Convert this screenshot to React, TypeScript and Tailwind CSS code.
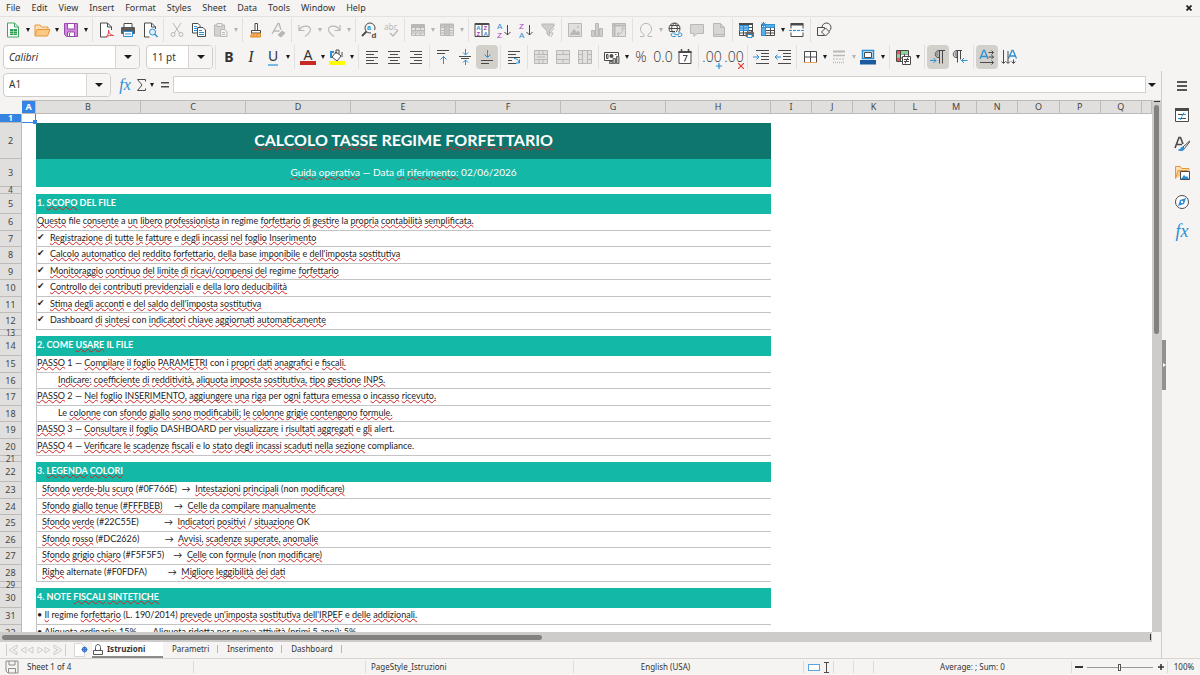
import type { ReactNode } from "react";
import clsx from "clsx";

const INK = "#4a4a4a";
const BLUE = "#2a8fd4";
const DIM = "#bab8b5";

const Icon = ({ children }: { children: ReactNode }) => (
  <svg className="w-4 h-4 shrink-0 overflow-visible" viewBox="0 0 16 16" fill="none" stroke={INK} strokeWidth="1" aria-hidden="true">
    {children}
  </svg>
);

const Caret = ({ dim, big }: { dim?: boolean; big?: boolean }) => (
  <svg className={big ? "w-2 h-1 shrink-0" : "w-1 h-1 shrink-0"} viewBox="0 0 8 5" preserveAspectRatio="none" aria-hidden="true">
    <path d="M0 0h8L4 5z" fill={dim ? "#b5b3b0" : "#1c1c1c"} />
  </svg>
);

// lines given as [x1, x2] pairs stacked from the top
const Lines = ({ rows, y = 2, step = 3, color = INK }: { rows: number[][]; y?: number; step?: number; color?: string }) => (
  <path stroke={color} d={rows.map(([a, b], i) => `M${a} ${y + i * step + 0.5}H${b}`).join("")} />
);

const gridPath = "M1.5 2.5h13v11h-13zM1.5 5.5h13M1.5 8.5h13M1.5 11h13M5.5 2.5v11M10.5 2.5v11";

const icons: Record<string, ReactNode> = {
  new: (
    <>
      <path d="M2.500 1h7l4 4v10h-11z" fill="#fff" stroke="#3fa662" />
      <path d="M9.500 1v4h4" stroke="#3fa662" />
      <path d="M5 7h7v6H5z" fill="#2f9e55" stroke="none" />
      <path d="M5 9.500h7M5 11.500h7M8.500 7v6" stroke="#bfe5cb" strokeWidth=".6" />
    </>
  ),
  open: (
    <>
      <path d="M1 13.500V3h5l1.500 2H14v2.500" fill="#fce0b4" stroke="#e8973a" />
      <path d="M3 7.500h13L13.500 14H1z" fill="#fbc981" stroke="#e8973a" />
    </>
  ),
  save: (
    <>
      <path d="M1.500 1.500h13v13h-11l-2-2z" fill="#d188dd" stroke="#9b48ad" />
      <path d="M4.500 1.500h7V7h-7z" fill="#fff" stroke="#9b48ad" />
      <path d="M4.500 10h7v4.500h-7z" fill="#fff" stroke="#9b48ad" />
      <path d="M6.500 11v3" stroke="#9b48ad" />
    </>
  ),
  pdf: (
    <>
      <path d="M13.500 8V5l-4-4h-7v14h6" fill="#fff" />
      <path d="M9.500 1v4h4" />
      <path d="M8 15c2-2 3-4 2.500-7 1 4 2 5 5 5.500-3-.5-5 0-7.500 1.500" stroke="#e03b4a" />
    </>
  ),
  print: (
    <>
      <path d="M4 5V1.500h8V5" fill="#fff" />
      <rect x="1" y="5" width="14" height="7" rx="1" fill="#5a5a5a" stroke="none" />
      <path d="M3.500 9.500h9v5h-9z" fill="#fff" stroke={BLUE} />
      <path d="M5 12h6" stroke={BLUE} />
    </>
  ),
  preview: (
    <>
      <path d="M13.500 7V5l-4-4h-7v14h5" fill="#fff" />
      <path d="M9.500 1v4h4" />
      <circle cx="10.500" cy="10" r="3" fill="#dff0fb" stroke={BLUE} />
      <path d="m12.800 12.300 2.700 2.700" stroke={BLUE} strokeWidth="1.500" />
    </>
  ),
  cut: (
    <g stroke={DIM}>
      <path d="M4 1l6.500 10M12 1 5.500 11" />
      <circle cx="4" cy="12.500" r="2" />
      <circle cx="12" cy="12.500" r="2" />
    </g>
  ),
  copy: (
    <>
      <path d="M1.500 1.500H7l2 2V11H1.500z" fill="#fff" />
      <path d="M6.500 5.500H12l2.500 2.500v6.500h-8z" fill="#fff" />
      <path d="M3 4.500h3M3 6.500h3M3 8.500h3M8 8.500h3M8 10.500h5M8 12.500h5" stroke={BLUE} />
    </>
  ),
  paste: (
    <g stroke={DIM}>
      <path d="M1.500 3h10v11h-10z" fill="#d5d3d1" />
      <path d="M4 1.500h5v3H4z" fill="#eee" />
      <path d="M7.500 7.500h4l2.500 2v5H7.500z" fill="#f5f4f2" />
      <path d="M9 10.500h3M9 12.500h3" />
    </g>
  ),
  brush: (
    <>
      <path d="M7 8V1.500h2.500V8" fill="#fff" />
      <path d="M3.500 8.500h9v2.500h-9z" fill="#fff" />
      <path d="M3.500 11.500h9v3.500h-10z" fill="#f4b266" stroke="#e08a2c" />
      <path d="M6 12v3M9 12v3" stroke="#e08a2c" />
    </>
  ),
  clear: (
    <g stroke={DIM}>
      <path d="M2 12 8 1.500h1L11 8M4 9h5.500" strokeWidth="1.300" />
      <path d="m8 13 4-4 3 2-4 4z" fill={DIM} />
    </g>
  ),
  undo: <path d="M2 3v5.500h5.500M2.500 8C5 3 13 3 13.500 7.500c0 3-3 5-5.500 7" stroke={DIM} strokeWidth="1.200" />,
  redo: <path d="M14 3v5.500H8.500M13.500 8C11 3 3 3 2.500 7.500c0 3 3 5 5.500 7" stroke={DIM} strokeWidth="1.200" />,
  find: (
    <>
      <circle cx="9" cy="6" r="5" />
      <path d="M5.500 9.500 1 14" strokeWidth="1.800" />
      <path d="M10 8h6v8h-6z" fill="#f5f4f2" stroke="none" />
      <text x="6" y="8" fontSize="7" fontWeight="700" fontFamily="Liberation Sans" fill={BLUE} stroke="none">a</text>
      <text x="10.500" y="15.500" fontSize="8" fontWeight="700" fontFamily="Liberation Sans" fill={INK} stroke="none">d</text>
    </>
  ),
  spell: (
    <>
      <text x="1" y="8" fontSize="8" fontFamily="Noto Sans" fill={DIM} stroke="none">abc</text>
      <path d="m7 11 3 3 5-6" stroke={DIM} strokeWidth="1.300" />
    </>
  ),
  rows: (
    <>
      <path d={gridPath} stroke={DIM} fill="#e6e4e2" />
      <path d="M1.500 2.500h13v3h-13z" fill={DIM} stroke="none" />
      <path d="M2 9h12v2H2z" fill="#cfcdca" stroke="none" />
    </>
  ),
  cols: (
    <>
      <path d={gridPath} stroke={DIM} fill="#e6e4e2" />
      <path d="M5.500 2.500h5v11h-5zM1.500 2h13v2h-13z" fill="#c6c4c1" stroke={DIM} />
    </>
  ),
  sort: (
    <>
      <path d="M1 1.500h14v13H1zM8 2v12" fill="#fff" />
      <path d="M1 1h14v2H1z" fill={INK} stroke="none" />
      <g fontSize="6" fontWeight="700" fontFamily="Liberation Sans" stroke="none">
        <text x="2.200" y="8.200" fill={BLUE}>A</text>
        <text x="2.400" y="14" fill="#a43cba">Z</text>
        <text x="9.600" y="8.200" fill="#a43cba">Z</text>
        <text x="9.400" y="14" fill={BLUE}>A</text>
      </g>
    </>
  ),
  az: (
    <>
      <g fontSize="8" fontFamily="Liberation Sans" stroke="none">
        <text x="1" y="6.500" fill={BLUE}>A</text>
        <text x="1" y="15.500" fill="#a43cba">Z</text>
      </g>
      <path d="M11.500 3v10M8.500 10l3 3 3-3" />
    </>
  ),
  za: (
    <>
      <g fontSize="8" fontFamily="Liberation Sans" stroke="none">
        <text x="1" y="6.500" fill="#a43cba">Z</text>
        <text x="1" y="15.500" fill={BLUE}>A</text>
      </g>
      <path d="M11.500 3v10M8.500 10l3 3 3-3" />
    </>
  ),
  filter: (
    <>
      <path d="M2 2h12v2l-4.500 5v5L7 12V9L2 4z" fill="#cfcdca" stroke={DIM} />
      <path d="m14 6-4 5h3l-2 4" stroke={DIM} />
    </>
  ),
  image: (
    <>
      <path d="M1.500 1.500h13v13h-13z" fill="#e2e0de" stroke={DIM} />
      <path d="M3 12l4-5 3 3 1.500-1.500L13 11v2H3z" fill={DIM} stroke="none" />
      <circle cx="11" cy="5" r="1" fill={DIM} stroke="none" />
    </>
  ),
  chart: <path d="M2.500 8.500h3v6h-3zM6.500 1.500h3v13h-3zM10.500 6.500h3v8h-3z" fill="#cfcdca" stroke={DIM} />,
  pivot: (
    <>
      <path d="M1.500 1.500h13v13h-13z" fill="#e2e0de" stroke={DIM} />
      <path d="M2 3.500h12M3.500 2v12" stroke={DIM} strokeWidth="2" />
      <path d="M6 12c4 0 6-2 6-6M10 7.500 12 5.500l2 2M8 10l-2 2 2 2" stroke={DIM} />
    </>
  ),
  omega: <path d="M2 14.500h4v-2C3.500 11 2.500 9 2.500 7c0-7.500 11-7.500 11 0 0 2-1 4-3.500 5.500v2h4" stroke={DIM} />,
  globe: (
    <>
      <circle cx="7.500" cy="6.500" r="5.500" />
      <path d="M2 6.500h11M7.500 1c-4 4-4 7 0 11M7.500 1c4 4 4 7 0 11M3 3.500h9M3 9.500h5" />
      <path d="M3 10h13v6H3z" fill="#f5f4f2" stroke="none" />
      <path d="M8.500 11H5.500a1.800 1.800 0 0 0 0 3.500h3M11 11h2.500a1.800 1.800 0 0 1 0 3.500H11M7.500 12.700h4.500" stroke={BLUE} />
    </>
  ),
  comment: <path d="M1.500 2.500h13v9H8l-3 3v-3H1.500z" fill="#d8d6d4" stroke={DIM} />,
  header: (
    <>
      <path d="M2.500 1.500h7l4 4v9h-11z" fill="#d8d6d4" stroke={DIM} />
      <path d="M9.500 1.500v4h4M3 12.500h10" stroke={DIM} />
    </>
  ),
  area: (
    <>
      <path d={gridPath} fill="#fff" />
      <path d="M1 1h14v2H1z" fill={INK} stroke="none" />
      <path d="M1.500 3.500h9v5h-9z" fill="#7cc1ee" stroke={BLUE} />
      <path d="M1.500 6h9M5.500 3.500v5" stroke={BLUE} />
      <path d="M9.500 9h4v2h-4z" fill="#fff" stroke="#666" />
      <path d="M8 10.500h7.500v4H8z" fill="#666" stroke="#666" />
      <path d="M9.500 12.500h4.500v3H9.500z" fill="#fff" stroke={BLUE} />
    </>
  ),
  freeze: (
    <>
      <path d={gridPath} fill="#fff" />
      <path d="M5.500 2.500h9v3h-9zM1.500 5.500h4v8h-4z" fill="#58b0e8" stroke={BLUE} />
      <path d="M3.500 0v5M1 2.500h5M1.500 .8l4 3.500M5.500 .8l-4 3.500" stroke={BLUE} />
    </>
  ),
  split: (
    <>
      <path d="M2 6.500V2.500h12v4M2 10.500v4h12v-4" fill="#fff" />
      <path d="M1.500 1h13v2.500h-13z" fill={INK} stroke="none" />
      <path d="M0 8.500h16" stroke={BLUE} strokeDasharray="3 1" />
    </>
  ),
  shapes: (
    <>
      <circle cx="10.500" cy="5.500" r="4.500" />
      <path d="M1.500 5.500h7v8h-7z" fill="#f5f4f2" />
      <path d="m9.500 6 4 4-4 4-4-4z" fill="#f5f4f2" />
    </>
  ),
  left: <Lines rows={[[2, 14], [2, 10], [2, 14], [2, 10], [2, 14]]} />,
  center: <Lines rows={[[2, 14], [4, 12], [2, 14], [4, 12], [2, 14]]} />,
  right: <Lines rows={[[2, 14], [6, 14], [2, 14], [6, 14], [2, 14]]} />,
  top: (
    <>
      <Lines rows={[[2, 14], [2, 10]]} y={1} />
      <path d="M8.500 15V7.500M5.500 10.500l3-3 3 3" stroke={BLUE} />
    </>
  ),
  middle: (
    <>
      <Lines rows={[[2, 14], [4, 12]]} y={7} step={2} />
      <path d="M8.500 0v5.500M6 3.500l2.500 2.500L11 3.500M8.500 16v-5M6 13.500 8.500 11l2.500 2.500" stroke={BLUE} />
    </>
  ),
  bottom: (
    <>
      <Lines rows={[[2, 14], [2, 10]]} y={11} />
      <path d="M8.500 1v7M5.500 5.500l3 3 3-3" stroke={BLUE} />
    </>
  ),
  wrap: (
    <>
      <Lines rows={[[2, 14], [2, 10], [2, 14], [2, 6], [2, 10]]} />
      <path d="M8 9.500c3 0 4 1 5 4M13.500 10.500v3.500H10" stroke={BLUE} />
    </>
  ),
  merge: (
    <>
      <path d="M1.500 1.500h13v13h-13zM1.500 5.500h13M1.500 10.500h13M6 1.500v4M10 1.500v4M6 10.500v4M10 10.500v4" stroke={DIM} fill="#e2e0de" />
      <path d="M4 8h8" stroke={DIM} />
    </>
  ),
  mergeRow: <path d="M1.500 1.500h13v13h-13zM1.500 5.500h13M1.500 10.500h13M8 1.500v4M8 10.500v4" stroke={DIM} fill="#e2e0de" />,
  mergeCol: <path d="M1.500 1.500h13v13h-13zM1.500 5.500h4M10.500 5.500h4M1.500 10.500h4M10.500 10.500h4M5.500 1.500v13M10.500 1.500v13" stroke={DIM} fill="#e2e0de" />,
  money: (
    <>
      <path d="M.5 3.500h14v8H.5z" fill="#fff" />
      <circle cx="7.500" cy="7" r="2" fill={INK} stroke="none" />
      <path d="M2.500 5.500h1.500v4H2.500zM11 5.500h1.500" />
      <path d="M5.500 12.500h3v2h-3zM9 9.500h2.500v5H9zM12.500 7.500h2.500v7h-2.500z" fill="#b5b3b0" stroke="#666" />
    </>
  ),
  date: (
    <>
      <path d="M2 2.500h12v12H2z" fill="#fff" />
      <path d="M1.500 2h13v2h-13z" fill={INK} stroke="none" />
      <path d="M4.500 0v3M11.500 0v3" strokeWidth="1.500" />
      <path d="M6 6.500h4L7.500 12.500" strokeWidth="1.100" />
    </>
  ),
  indent: (
    <>
      <path d="M3 1.500h13M8 4.500h8M8 7.500h8M8 10.500h8M3 14.500h13" />
      <path d="M0 8h6M3.500 5.500 6 8l-2.500 2.500" stroke={BLUE} />
    </>
  ),
  outdent: (
    <>
      <path d="M3 1.500h13M8 4.500h8M8 7.500h8M8 10.500h8M3 14.500h13" />
      <path d="M0 8h6M2.500 5.500 0 8l2.500 2.500" stroke={BLUE} />
    </>
  ),
  border: (
    <>
      <path d="M2.500 2.500h12v11h-12z" fill="#fff" />
      <path d="M8.500 2.500v11M2.500 8h12" />
      <path d="M2 13.500h13" stroke="#e8a35a" />
    </>
  ),
  lineStyle: (
    <g stroke={DIM}>
      <path d="M2 2.500h12" strokeWidth="2" />
      <path d="M2 6.500h12" strokeWidth="1.500" />
      <path d="M2 10h12" strokeDasharray="2 1" />
      <path d="M2 13.500h12" strokeWidth="1.500" strokeDasharray="1 1" />
    </g>
  ),
  lineColor: (
    <>
      <path d="M2.500 1.500h11v8h-11z" fill="#d9eefb" stroke={BLUE} strokeWidth="1.500" />
      <path d="M4.500 3.500h7v5h-7z" fill="#fff" />
      <path d="M0 11h16v4.500H0z" fill="#1d5a9e" stroke="none" />
    </>
  ),
  conditional: (
    <>
      <path d="M1.500 1.500h12v11h-12zM1.500 5h12M1.500 9h12M5.500 1.500v11M9.500 1.500v11" fill="#fff" />
      <path d="M2 2h3v3H2zM2 9h3v3H2z" fill="#e8584f" stroke="none" />
      <path d="M6 2h7v3H6zM2 5.500h3v3H2z" fill="#8ed39b" stroke="none" />
      <path d="M7.500 7.500h8v8h-8z" fill="#fff" />
      <path d="M9 10.500h5M9 12.500h5M13 8.500l-3 6" />
    </>
  ),
  ltr: (
    <>
      <path d="M9 8.500C4 9 4 2 9 1.500h6M9.500 1.500v13M12.500 1.500v13" />
      <path d="M8.500 2C5 2.500 5 8 8.500 8z" fill="#9b9a98" stroke="none" />
      <path d="M0 11.500h6M3.500 9 6 11.500 3.500 14" stroke={BLUE} />
    </>
  ),
  rtl: (
    <>
      <path d="M5 8.500C0 9 0 2 5 1.500h5M5.500 1.500v12M8.500 1.500v9" />
      <path d="M5 2C1.500 2.500 1.500 8 5 8z" fill="#9b9a98" stroke="none" />
      <path d="M9.500 11.500h6M12 9l-2.500 2.500L12 14" stroke={BLUE} />
    </>
  ),
  horizontal: (
    <>
      <path d="M1 10 4.500 1.500h1L9 10M2.500 7.500h5" stroke={BLUE} strokeWidth="1.300" />
      <path d="M9.500 3.500h5M9.500 8h5M1 13.500h13.500M12.500 1.500l2 2-2 2M12.500 6l2 2-2 2M12.500 11.500l2 2-2 2" />
    </>
  ),
  vertical: (
    <>
      <path d="M7.500 9.500 11 1.500h1L15.500 9.500M9 7h5" stroke={BLUE} strokeWidth="1.300" />
      <path d="M2.500 1v13M7 2v12M12.500 10.500V14M.5 12.500l2 2 2-2M5 12.500l2 2 2-2M10.500 12.500l2 2 2-2" />
    </>
  ),
  properties: (
    <>
      <path d="M1.500 1.500h13v13h-13z" fill="#fff" />
      <path d="M1 1h14v3H1z" fill={INK} stroke="none" />
      <path d="M4 7.500h8M4 11.500h8" />
      <path d="M10 5.500 8 9M8 9.500 6 13M9 7.500h3M4 11.500h3" stroke={BLUE} />
    </>
  ),
  styles: (
    <>
      <path d="M1 12 5 1.500h1.500L9 8M3 8.500h5" strokeWidth="1.600" />
      <path d="m15.500 5-6.500 6 1.500 1.500L15.500 6z" fill="#fff" />
      <path d="M4.500 14c3 0 2-3 4.500-3l1.500 1.500c-1 2.500-4 2.500-6 1.500z" fill={BLUE} stroke={BLUE} />
    </>
  ),
  gallery: (
    <>
      <path d="M1.500 13.500v-12h5l1 2H15v2" fill="#fce0b4" stroke="#e8973a" />
      <path d="M1.500 13.500 4 5.500h10" fill="#fbc981" stroke="#e8973a" />
      <path d="M6.500 6.500h9v8h-9z" fill="#fff" />
      <path d="m7 14 3-4 2 2 1-1 2 3z" fill={BLUE} stroke="none" />
    </>
  ),
  navigator: (
    <>
      <circle cx="8" cy="8" r="6.500" fill="#fff" />
      <path d="m12 4-2 6-6 2 2-6z" fill={BLUE} stroke="none" />
      <circle cx="8" cy="8" r="1.200" fill="#fff" stroke="none" />
    </>
  ),
  diskDim: <path d="M2 2h12v12H4l-2-2zM5 2v4h6V2M4.500 14V9.500h7V14" stroke="#8e8c8a" />,
};

type Tool = { id: string; label: string; drop?: boolean; off?: boolean; on?: boolean; face?: ReactNode };
const SEP = "|";

const standard: (Tool | string)[] = [
  { id: "new", label: "New", drop: true },
  { id: "open", label: "Open", drop: true },
  { id: "save", label: "Save", drop: true }, SEP,
  { id: "pdf", label: "Export as PDF" },
  { id: "print", label: "Print" },
  { id: "preview", label: "Print preview" }, SEP,
  { id: "cut", label: "Cut", off: true },
  { id: "copy", label: "Copy" },
  { id: "paste", label: "Paste", drop: true, off: true }, SEP,
  { id: "brush", label: "Clone formatting" },
  { id: "clear", label: "Clear formatting", off: true }, SEP,
  { id: "undo", label: "Undo", drop: true, off: true },
  { id: "redo", label: "Redo", drop: true, off: true }, SEP,
  { id: "find", label: "Find and replace" },
  { id: "spell", label: "Spelling", off: true }, SEP,
  { id: "rows", label: "Row", drop: true, off: true },
  { id: "cols", label: "Column", drop: true, off: true }, SEP,
  { id: "sort", label: "Sort" },
  { id: "az", label: "Sort ascending" },
  { id: "za", label: "Sort descending" },
  { id: "filter", label: "AutoFilter", off: true }, SEP,
  { id: "image", label: "Insert image", off: true },
  { id: "chart", label: "Insert chart", off: true },
  { id: "pivot", label: "Pivot table", off: true }, SEP,
  { id: "omega", label: "Special character", drop: true, off: true },
  { id: "globe", label: "Hyperlink" },
  { id: "comment", label: "Comment", off: true },
  { id: "header", label: "Headers and footers", off: true }, SEP,
  { id: "area", label: "Print area" },
  { id: "freeze", label: "Freeze rows and columns", drop: true },
  { id: "split", label: "Split window" }, SEP,
  { id: "shapes", label: "Draw functions" },
];

const num = (text: string, mark?: string, color?: string) => (
  <span className="relative font-['Open_Sans',sans-serif] font-light text-sm leading-4 text-[#333]">
    {text}
    {mark && (
      <svg className="absolute right-0 -bottom-1 size-[6px]" viewBox="0 0 6 6" stroke={color} strokeWidth="1.200" aria-hidden="true">
        <path d={mark} />
      </svg>
    )}
  </span>
);

const formatting: (Tool | string)[] = [
  SEP,
  { id: "bold", label: "Bold", face: <b className="text-sm leading-4">B</b> },
  { id: "italic", label: "Italic", face: <i className="font-['Liberation_Serif',serif] text-base leading-4">I</i> },
  { id: "underline", label: "Underline", drop: true, face: <span className="text-sm leading-4 border-b-2 border-[#7ab8e6]">U</span> },
  SEP,
  { id: "color", label: "Font colour", drop: true, face: <span className="w-4 text-center text-sm leading-3 border-b-4 border-[#c62a23]">A</span> },
  {
    id: "fill", label: "Background colour", drop: true, face: (
      <Icon>
        <path d="M0 12h16v4H0z" fill="#ffff00" stroke="none" />
        <path d="m7 3 5 4-4 5-5-4z" fill="#fff" />
        <path d="M7 5V1h3v4M13 3v5" />
        <path d="M2 9V3h3" stroke={BLUE} strokeWidth="2" />
      </Icon>
    ),
  },
  SEP,
  { id: "left", label: "Align left" },
  { id: "center", label: "Centre" },
  { id: "right", label: "Align right" }, SEP,
  { id: "top", label: "Align top" },
  { id: "middle", label: "Centre vertically" },
  { id: "bottom", label: "Align bottom", on: true }, SEP,
  { id: "wrap", label: "Wrap text" }, SEP,
  { id: "merge", label: "Merge and centre", off: true },
  { id: "mergeRow", label: "Merge cells", off: true },
  { id: "mergeCol", label: "Unmerge cells", off: true }, SEP,
  { id: "money", label: "Currency", drop: true },
  { id: "percent", label: "Percent", face: num("%") },
  { id: "number", label: "Number", face: num("0.0") },
  { id: "date", label: "Date" }, SEP,
  { id: "addDecimal", label: "Add decimal place", face: num(".00", "M3 0v6M0 3h6", BLUE) },
  { id: "delDecimal", label: "Delete decimal place", face: num(".00", "M0 0l6 6M6 0 0 6", "#e03b3b") }, SEP,
  { id: "indent", label: "Increase indent" },
  { id: "outdent", label: "Decrease indent" }, SEP,
  { id: "border", label: "Borders", drop: true },
  { id: "lineStyle", label: "Border style", drop: true, off: true },
  { id: "lineColor", label: "Border colour", drop: true }, SEP,
  { id: "conditional", label: "Conditional formatting", drop: true }, SEP,
  { id: "ltr", label: "Left to right", on: true },
  { id: "rtl", label: "Right to left" }, SEP,
  { id: "horizontal", label: "Text left to right", on: true },
  { id: "vertical", label: "Text top to bottom" },
];

const Tools = ({ items }: { items: (Tool | string)[] }) => (
  <>
    {items.map((item, i) => {
      if (typeof item === "string") {
        return <span key={i} className="w-[5px] h-6 shrink-0 flex justify-center"><span className="w-px bg-[#e2e0de]" /></span>;
      }
      const beforeSep = items[i + 1] === SEP;
      return (
        <div key={item.id} className={clsx("flex items-center shrink-0", item.drop && (beforeSep ? "w-[30px]" : "w-[29px]"))}>
          <button aria-label={item.label} disabled={item.off} className={clsx("w-[22px] h-6 flex items-center justify-center rounded-sm text-[#333]", item.on && "bg-[#d3d0cc]")}>
            {item.face ?? <Icon>{icons[item.id]}</Icon>}
          </button>
          {item.drop && (
            <button aria-label={item.label + " options"} disabled={item.off} className="w-[7px] h-6 flex items-center justify-center">
              <Caret dim={item.off} />
            </button>
          )}
        </div>
      );
    })}
  </>
);

const Combo = ({ label, value, className, italic }: { label: string; value: string; className: string; italic?: boolean }) => (
  <div className={clsx("h-6 shrink-0 flex rounded border border-[#cfccc9] bg-white overflow-hidden text-[10px]", className)}>
    <input aria-label={label} defaultValue={value} className={clsx("flex-1 min-w-0 px-[5px] outline-none", italic && "italic")} />
    <button aria-label={label + " list"} className="w-6 flex items-center justify-center border-l border-[#d8d5d2] bg-[#f6f5f4]">
      <Caret big />
    </button>
  </div>
);

// a leading * marks a word that the spell checker underlines
const Spelled = ({ text }: { text: string }) => (
  <>
    {text.split(/(\s+)/).map((word, i) => {
      const at = word.indexOf("*");
      if (at < 0) return word;
      return (
        <span key={i}>
          {word.slice(0, at)}
          <span className="underline decoration-wavy decoration-1 decoration-[#d42020] underline-offset-[0px] [text-decoration-skip-ink:none]">{word.slice(at + 1)}</span>
        </span>
      );
    })}
  </>
);

type Row = { h: string; kind?: "title" | "sub" | "head" | "gap"; text?: string; pad?: string; check?: boolean };

const H16 = "h-4";
const H17 = "h-[17px]";

const rows: Row[] = [
  { h: "h-[9px]", kind: "gap" },
  { h: "h-9", kind: "title", text: "*CALCOLO *TASSE REGIME *FORFETTARIO" },
  { h: "h-7", kind: "sub", text: "*Guida *operativa — Data *di *riferimento: 02/06/2026" },
  { h: "h-[7px]", kind: "gap" },
  { h: "h-5", kind: "head", text: "1. *SCOPO DEL FILE" },
  { h: H17, text: "*Questo file *consente a *un *libero *professionista in regime *forfettario *di *gestire la *propria *contabilità *semplificata." },
  { h: H16, check: true, text: "*Registrazione *di *tutte *le *fatture e *degli *incassi *nel *foglio *Inserimento" },
  { h: H17, check: true, text: "*Calcolo *automatico *del *reddito *forfettario, *della base *imponibile e *dell'imposta *sostitutiva" },
  { h: H16, check: true, text: "*Monitoraggio *continuo *del *limite *di *ricavi/compensi *del regime *forfettario" },
  { h: H17, check: true, text: "*Controllo *dei *contributi *previdenziali e *della *loro *deducibilità" },
  { h: H16, check: true, text: "*Stima *degli *acconti e *del *saldo *dell'imposta *sostitutiva" },
  { h: H17, check: true, text: "Dashboard *di *sintesi con *indicatori *chiave *aggiornati *automaticamente" },
  { h: "h-[6px]", kind: "gap" },
  { h: "h-5", kind: "head", text: "2. COME *USARE IL FILE" },
  { h: H17, text: "*PASSO 1 — *Compilare *il *foglio *PARAMETRI con i *propri *dati *anagrafici e *fiscali." },
  { h: H16, pad: "pl-[21px]", text: "*Indicare: *coefficiente *di *redditività, *aliquota *imposta *sostitutiva, *tipo *gestione *INPS." },
  { h: H17, text: "*PASSO 2 — *Nel *foglio *INSERIMENTO, *aggiungere *una *riga per *ogni *fattura *emessa o *incasso *ricevuto." },
  { h: H16, pad: "pl-[21px]", text: "Le *colonne con *sfondo *giallo *sono *modificabili; *le *colonne *grigie *contengono *formule." },
  { h: H17, text: "*PASSO 3 — *Consultare *il *foglio DASHBOARD per *visualizzare i *risultati *aggregati e *gli alert." },
  { h: H17, text: "*PASSO 4 — *Verificare *le *scadenze *fiscali e lo *stato *degli *incassi *scaduti *nella *sezione compliance." },
  { h: "h-[6px]", kind: "gap" },
  { h: "h-5", kind: "head", text: "3. *LEGENDA *COLORI" },
  { h: H17, pad: "pl-[5px]", text: "*Sfondo *verde-blu *scuro (#0F766E)  →  *Intestazioni *principali (non *modificare)" },
  { h: H16, pad: "pl-[5px]", text: "*Sfondo *giallo *tenue (*#FFFBEB)     →  *Celle *da *compilare *manualmente" },
  { h: H17, pad: "pl-[5px]", text: "*Sfondo *verde (#22C55E)           →  *Indicatori *positivi / *situazione OK" },
  { h: H16, pad: "pl-[5px]", text: "*Sfondo *rosso (#DC2626)           →  *Avvisi, *scadenze *superate, *anomalie" },
  { h: H17, pad: "pl-[5px]", text: "*Sfondo *grigio *chiaro (#F5F5F5)    →  *Celle con *formule (non *modificare)" },
  { h: H17, pad: "pl-[5px]", text: "*Righe alternate (#F0FDFA)         →  *Migliore *leggibilità *dei *dati" },
  { h: "h-[6px]", kind: "gap" },
  { h: "h-5", kind: "head", text: "4. NOTE *FISCALI *SINTETICHE" },
  { h: H17, text: "• *Il regime *forfettario (L. 190/2014) *prevede *un'imposta *sostitutiva *dell'IRPEF e *delle *addizionali." },
  { h: H16, text: "• *Aliquota *ordinaria: 15%  —  *Aliquota *ridotta per *nuova *attività (*primi 5 *anni): 5%" },
];

const wideCols = ["B", "C", "D", "E", "F", "G", "H"];
const plainCols = ["I", "J", "K", "L", "M", "N", "O", "P", "Q"];

const RowCell = ({ row }: { row: Row }) => {
  if (row.kind === "gap") return <div className={row.h} />;
  return (
    <div
      className={clsx(
        "flex items-center overflow-hidden whitespace-pre pb-0.5 font-['Lato',sans-serif]",
        row.h,
        row.kind === "title" && "justify-center bg-[#0f766e] text-white font-bold text-base",
        row.kind === "sub" && "justify-center bg-[#14b8a6] text-white text-[10px]",
        row.kind === "head" && "bg-[#14b8a6] text-white font-bold text-[9px] pl-px",
        !row.kind && "border-l border-b border-[#c4c4c4] text-[#1c1c1c] text-[9px]",
        row.pad,
      )}
    >
      {row.check && <span className="w-[13px] shrink-0 font-['DejaVu_Sans',sans-serif]">✔</span>}
      <span><Spelled text={row.text ?? ""} /></span>
    </div>
  );
};

const Sheet = () => (
  <table className="w-full table-fixed border-collapse bg-white">
    <colgroup>
      <col className="w-[22px]" />
      <col className="w-[14px]" />
      {wideCols.map((c) => <col key={c} className="w-[105px]" />)}
      {plainCols.map((c) => <col key={c} />)}
      <col className="w-[10px]" />
    </colgroup>
    <thead>
      <tr className="text-[9px] leading-3 text-[#444]">
        <td className="p-0 bg-[#f5f4f2]" />
        {["A", ...wideCols, ...plainCols, ""].map((c) => (
          <th key={c} scope="col" className="p-0 font-normal">
            <div className={clsx("h-[14px] border-y border-r border-[#bdbab7]", c === "A" ? "bg-[#3584e4] text-white font-bold" : "bg-[#e1dfdd]")}>{c}</div>
          </th>
        ))}
      </tr>
    </thead>
    <tbody>
      {rows.map((row, i) => (
        <tr key={i}>
          <th scope="row" className="p-0 font-normal">
            <div
              className={clsx(
                "flex items-center justify-center border-r border-b border-[#bdbab7]",
                row.h,
                row.kind === "gap" ? "text-[8px] leading-[8px]" : "text-[9px] leading-3",
                i === 0 ? "bg-[#3584e4] text-white font-bold" : "bg-[#e1dfdd] text-[#444]",
              )}
            >
              {i + 1}
            </div>
          </th>
          <td className="p-0">
            {i === 0 && (
              <div className="relative h-[9px] border-r border-b border-[#3584e4]">
                <span className="absolute -right-0.5 -bottom-0.5 size-1 bg-[#3584e4]" />
              </div>
            )}
          </td>
          <td colSpan={7} className="p-0"><RowCell row={row} /></td>
          <td colSpan={10} className="p-0" />
        </tr>
      ))}
    </tbody>
  </table>
);

const StatusSep = () => <span className="w-px h-3 bg-[#dddad7]" />;

const App = () => {
  return (
    <div className="h-screen flex flex-col overflow-hidden bg-[#f5f4f2] text-[#333] text-[9px] font-['Noto_Sans',sans-serif]">
      <nav className="h-[17px] shrink-0 flex items-center gap-[11px] pl-[6px] pr-2 border-b border-[#e4e2e0]">
        {["File", "Edit", "View", "Insert", "Format", "Styles", "Sheet", "Data", "Tools", "Window", "Help"].map((m) => (
          <button key={m}>{m}</button>
        ))}
        <button aria-label="Close document" className="ml-auto">
          <svg className="size-[6px]" viewBox="0 0 6 6" stroke="#222" strokeWidth="1.800"><path d="m.5.5 5 5M5.500.5l-5 5" /></svg>
        </button>
      </nav>

      <div className="h-[26px] shrink-0 flex items-center pl-0.5"><Tools items={standard} /></div>

      <div className="h-7 shrink-0 flex items-center pl-[3px]">
        <Combo label="Font name" value="Calibri" className="w-[137px] mr-[6px]" italic />
        <Combo label="Font size" value="11 pt" className="w-[67px]" />
        <Tools items={formatting} />
      </div>

      <div className="flex-1 min-h-0 flex">
        <main className="flex-1 min-w-0 flex flex-col">
          <div className="h-[29px] shrink-0 flex items-center pl-[3px] pr-[5px] pb-0.5">
            <Combo label="Name box" value="A1" className="w-[108px]" />
            <button aria-label="Function wizard" className="w-5 ml-1 flex justify-center font-['Liberation_Serif',serif] italic text-base leading-4 text-[#2a8fd4]">fx</button>
            <button aria-label="Select function" className="w-3 flex justify-center">
              <svg className="w-[9px] h-3" viewBox="0 0 9 12" fill="none" stroke={INK}><path d="M8.500 2.500v-2H.5L5 6 .5 11.500h8v-2" /></svg>
            </button>
            <button aria-label="Function list" className="w-[10px] flex justify-center"><Caret /></button>
            <button aria-label="Formula" className="w-4 flex justify-center">
              <svg className="w-2 h-[6px]" viewBox="0 0 8 6" fill={INK}><path d="M0 0h8v1.500H0zM0 4h8v1.500H0z" /></svg>
            </button>
            <input aria-label="Formula bar" className="flex-1 min-w-0 h-[17px] mr-[2px] px-1 bg-white border border-[#d3d0cd] outline-none" />
            <button aria-label="Expand formula bar"><Caret big /></button>
          </div>

          <div className="flex-1 min-h-0 flex">
            <div className="flex-1 min-w-0 overflow-hidden"><Sheet /></div>
            <div className="w-[9px] shrink-0 flex flex-col items-center bg-[#cdcccb]">
              <span className="w-[6px] h-px mt-px mb-[3px] bg-[#333]" />
              <span className="w-[5px] h-[43%] rounded-full bg-[#828180]" />
            </div>
          </div>
          <div className="h-[10px] shrink-0 mr-[9px] flex items-center justify-between bg-[#cdcccb] pl-0.5 pr-px">
            <span className="w-[47%] h-[5px] rounded-full bg-[#828180]" />
            <span className="w-px h-[6px] bg-[#333]" />
          </div>

          <div className="h-4 shrink-0 flex items-center pl-[6px] text-[8px]">
            <svg className="w-[60px] h-3 mr-2 shrink-0" viewBox="0 0 60 12" fill="none" stroke="#cfcdca" aria-hidden="true">
              <path d="M.5 0v12M11 1 3 6l8 5V8l-4-2 4-2zM20 3l-5 3 5 3zM27 3l-5 3 5 3zM32 3l5 3-5 3zM39 3l5 3-5 3zM48 1l8 5-8 5V8l4-2-4-2zM59.500 0v12" />
            </svg>
            <button aria-label="Add sheet" className="w-[18px]">
              <svg className="w-[14px] h-[14px]" viewBox="0 0 14 14" fill="none">
                <path d="M.5.5h7l3 3v10H.5z" fill="#fff" stroke="#d8d6d4" />
                <circle cx="10.500" cy="6.500" r="2" stroke="#3b74c4" strokeWidth="1.300" />
                <path d="M10.500 3.500v6M7.500 6.500h6" stroke="#3b74c4" />
              </svg>
            </button>
            <button className="h-4 w-[71px] flex items-center gap-1 pl-px bg-white border-b-2 border-[#8d8b89] font-bold">
              <svg className="w-[10px] h-[11px]" viewBox="0 0 10 11" fill="none" stroke="#555"><path d="M.5 6.500h9v4h-9zM2.500 6.500v-3c0-4 5-4 5 0v3" /></svg>
              Istruzioni
            </button>
            {["Parametri", "Inserimento", "Dashboard"].map((s) => (
              <button key={s} className="h-3 mb-0.5 leading-3 flex items-center pl-[9px] gap-2">
                {s}
                <span className="w-px h-2 bg-[#b9b7b4]" />
              </button>
            ))}
          </div>
        </main>

        <aside className="w-[39px] shrink-0 flex border-l border-[#cfccc9]">
          <button aria-label="Hide sidebar" className="self-center w-1 h-[50px] bg-[#929190] text-white flex items-center justify-center">
            <svg className="w-[3px] h-1" viewBox="0 0 3 4" fill="#fff"><path d="M0 0v4l3-2z" /></svg>
          </button>
          <div className="flex-1 flex flex-col items-center gap-[13px] pt-[7px] pr-0.5">
            <button aria-label="Sidebar settings">
              <svg className="w-4 h-4" viewBox="0 0 16 16" stroke="#222" strokeWidth="1.500"><path d="M3 4h10M3 8h10M3 12h10" /></svg>
            </button>
            {["properties", "styles", "gallery", "navigator"].map((id) => (
              <button key={id} aria-label={id}><Icon>{icons[id]}</Icon></button>
            ))}
            <button aria-label="functions" className="h-4 font-['Liberation_Serif',serif] italic text-lg leading-4 text-[#2a8fd4]">fx</button>
          </div>
        </aside>
      </div>

      <footer className="h-[17px] shrink-0 flex items-center border-t border-[#d6d3d0] text-[#333] text-[8px]">
        <span className="w-[193px] flex items-center gap-[7px] pl-1"><Icon>{icons.diskDim}</Icon>Sheet 1 of 4</span>
        <StatusSep />
        <span className="w-[171px]" />
        <StatusSep />
        <span className="w-[207px] pl-[5px]">PageStyle_Istruzioni</span>
        <StatusSep />
        <span className="flex-1 text-center pr-[46px]">English (USA)</span>
        <StatusSep />
        <span className="w-[29px] flex items-center justify-center gap-1">
          <span className="w-3 h-[7px] border border-[#5ba5dc] bg-white" />
          <svg className="w-[5px] h-[11px]" viewBox="0 0 5 11" fill="none" stroke={INK}><path d="M0 .5h5M0 10.500h5M2.500 0v11" /></svg>
        </span>
        <StatusSep />
        <span className="w-[19px]" />
        <StatusSep />
        <span className="w-[19px]" />
        <StatusSep />
        <span className="w-[197px] text-center">Average: ; Sum: 0</span>
        <StatusSep />
        <div className="w-[95px] flex items-center justify-center gap-1">
          <button aria-label="Zoom out" className="w-2 h-2 flex items-center"><span className="w-full h-0.5 bg-[#333]" /></button>
          <input
            type="range"
            aria-label="Zoom"
            defaultValue={50}
            className="w-[66px] h-3 appearance-none bg-transparent [&::-webkit-slider-runnable-track]:h-px [&::-webkit-slider-runnable-track]:bg-[#999] [&::-webkit-slider-thumb]:appearance-none [&::-webkit-slider-thumb]:w-[3px] [&::-webkit-slider-thumb]:h-[7px] [&::-webkit-slider-thumb]:-mt-[3px] [&::-webkit-slider-thumb]:border [&::-webkit-slider-thumb]:border-[#555] [&::-webkit-slider-thumb]:bg-white"
          />
          <button aria-label="Zoom in" className="w-2 h-2">
            <svg className="w-2 h-2" viewBox="0 0 8 8" stroke="#333" strokeWidth="1.600"><path d="M1 4h6M4 1v6" /></svg>
          </button>
        </div>
        <StatusSep />
        <span className="w-8 text-center">100%</span>
      </footer>
    </div>
  );
};

export default App;
